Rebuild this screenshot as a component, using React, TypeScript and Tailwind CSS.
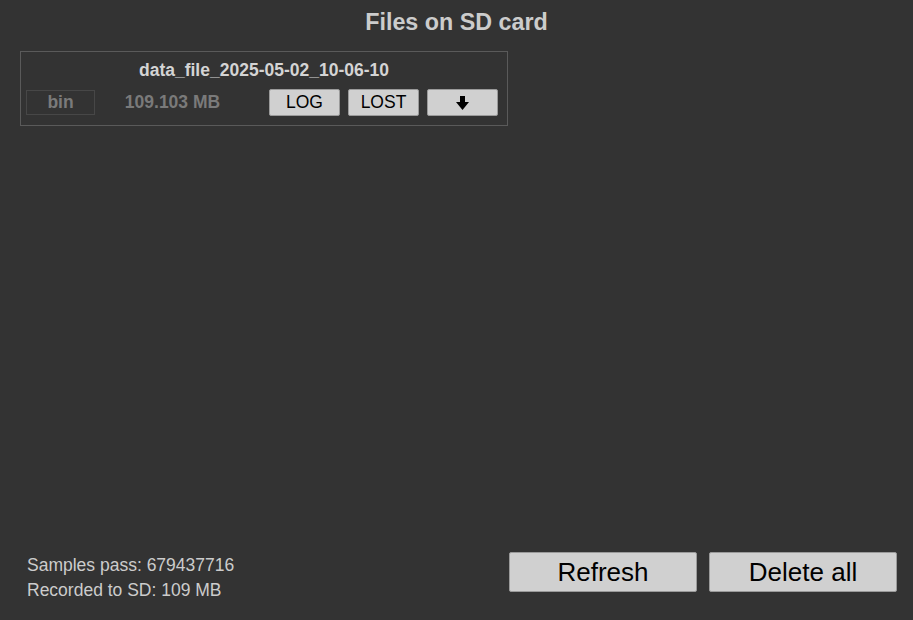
import React from "react"

const files = [{ name: "data_file_2025-05-02_10-06-10", ext: "bin", size: "109.103 MB" }]

function DownArrow() {
  return (
    <svg width="13" height="14" viewBox="0 0 13 14" className="block">
      <rect x="4" y="0" width="5" height="7" fill="#000" />
      <polygon points="0,6 13,6 6.5,14" fill="#000" />
    </svg>
  )
}

function SmallButton({ children }: { children: React.ReactNode }) {
  return (
    <button className="flex h-[27px] w-[71px] items-center justify-center rounded-[2px] border border-[#9a9a9a] bg-[#d0d0d0] text-[17.5px] leading-none text-black">
      {children}
    </button>
  )
}

function BigButton({ children }: { children: React.ReactNode }) {
  return (
    <button className="flex h-[40px] w-[188px] items-center justify-center rounded-[2px] border border-[#9a9a9a] bg-[#d0d0d0] text-[26px] leading-none text-black">
      {children}
    </button>
  )
}

export default function App() {
  return (
    <div
      className="flex h-[620px] w-full flex-col bg-[#333333]"
      style={{ fontFamily: '"Liberation Sans", Arial, sans-serif' }}
    >
      <h1 className="pt-[10px] text-center text-[23.3px] font-bold leading-[24px] text-[#cccccc]">
        Files on SD card
      </h1>

      {files.map((file) => (
        <div
          key={file.name}
          className="ml-[20px] mt-[17px] w-[488px] border border-[#5a5a5a] pb-[9px] pt-[8px]"
        >
          <div className="text-center text-[17.5px] font-bold leading-[20px] text-[#d4d4d4]">
            {file.name}
          </div>
          <div className="mt-[9px] flex items-center">
            <div className="ml-[5px] flex h-[25px] w-[69px] items-center justify-center border border-[#474747] text-[17.5px] font-bold text-[#7a7a7a]">
              {file.ext}
            </div>
            <div className="w-[155px] text-center text-[17.5px] font-bold text-[#7a7a7a]">
              {file.size}
            </div>
            <div className="ml-[19px] flex gap-[8px]">
              <SmallButton>LOG</SmallButton>
              <SmallButton>LOST</SmallButton>
              <SmallButton>
                <DownArrow />
              </SmallButton>
            </div>
          </div>
        </div>
      ))}

      <div className="flex-1" />

      <div className="flex items-end justify-between pb-[17px] pl-[27px] pr-[16px]">
        <div className="text-[17.5px] leading-[25px] text-[#cccccc]">
          <div>Samples pass: 679437716</div>
          <div>Recorded to SD: 109 MB</div>
        </div>
        <div className="mb-[11px] flex gap-[12px]">
          <BigButton>Refresh</BigButton>
          <BigButton>Delete all</BigButton>
        </div>
      </div>
    </div>
  )
}
